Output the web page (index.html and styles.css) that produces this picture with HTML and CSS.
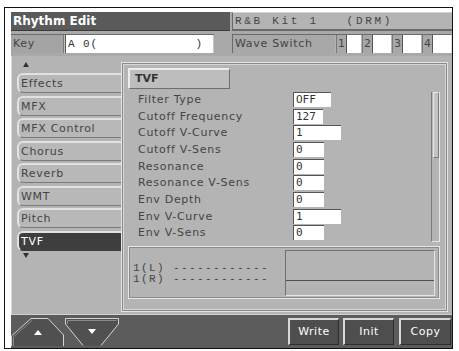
FILE: index.html
```html
<!DOCTYPE html>
<html>
<head>
<meta charset="utf-8">
<link rel="stylesheet" href="styles.css">
</head>
<body>
<div class="frame">
  <div class="lcd">
    <div class="toprow">
      <div class="title">Rhythm Edit</div>
      <div class="kitname">R&amp;B Kit 1   (DRM)</div>
    </div>
    <div class="keyrow">
      <div class="keybox">
        <span class="keylabel">Key</span>
        <span class="keyfield">A 0(             )</span>
      </div>
      <div class="wavebox">
        <span class="wavelabel">Wave Switch</span>
        <span class="wnum">1</span><span class="wchk first"></span>
        <span class="wnum">2</span><span class="wchk"></span>
        <span class="wnum">3</span><span class="wchk"></span>
        <span class="wnum">4</span><span class="wchk"></span>
      </div>
    </div>
    <div class="main">
      <div class="tabs">
        <div class="arrow"><span class="tri-up"></span></div>
        <div class="tablist">
          <div class="tab">Effects</div>
          <div class="tab">MFX</div>
          <div class="tab">MFX Control</div>
          <div class="tab">Chorus</div>
          <div class="tab">Reverb</div>
          <div class="tab">WMT</div>
          <div class="tab">Pitch</div>
          <div class="tab sel">TVF</div>
        </div>
        <div class="arrow down"><span class="tri-down"></span></div>
      </div>
      <div class="panel">
        <div class="phead">TVF</div>
        <div class="params">
          <div class="plist">
            <div class="prow"><span class="plabel">Filter Type</span><span class="pval w38">OFF</span></div>
            <div class="prow"><span class="plabel">Cutoff Frequency</span><span class="pval w30">127</span></div>
            <div class="prow"><span class="plabel">Cutoff V-Curve</span><span class="pval w48">1</span></div>
            <div class="prow"><span class="plabel">Cutoff V-Sens</span><span class="pval w31">0</span></div>
            <div class="prow"><span class="plabel">Resonance</span><span class="pval w31">0</span></div>
            <div class="prow"><span class="plabel">Resonance V-Sens</span><span class="pval w31">0</span></div>
            <div class="prow"><span class="plabel">Env Depth</span><span class="pval w31">0</span></div>
            <div class="prow"><span class="plabel">Env V-Curve</span><span class="pval w48">1</span></div>
            <div class="prow"><span class="plabel">Env V-Sens</span><span class="pval w31">0</span></div>
          </div>
          <div class="scroll"><div class="thumb"></div></div>
        </div>
        <div class="display">
          <div class="dtext">1(L) ------------<br>1(R) ------------</div>
          <div class="dbox"><div class="dtop"></div><div class="dbot"></div></div>
        </div>
      </div>
    </div>
    <div class="bottombar">
      <div class="navbtns">
        <svg class="nav" width="53" height="28" viewBox="0 0 53 28">
          <polygon points="0.5,28 0.5,18 20,0.5 37,0.5 52.5,17 52.5,28" fill="#505050"/>
          <polyline points="0.5,28 0.5,18 20,0.5 37,0.5 52.5,17 52.5,28" fill="none" stroke="#d4d4d4" stroke-width="1"/>
          <polyline points="2.5,28 2.5,19 21,2.5" fill="none" stroke="#8a8a8a" stroke-width="1"/>
          <polygon points="27,12 31,17 23,17" fill="#ffffff"/>
        </svg>
        <svg class="nav" width="54" height="28" viewBox="0 0 54 28">
          <polygon points="0.5,0.5 53.5,0.5 53.5,6 36,27.5 18,27.5 0.5,6" fill="#505050"/>
          <polyline points="18,27.5 0.5,6 0.5,0.5 53.5,0.5 53.5,6 36,27.5" fill="none" stroke="#d4d4d4" stroke-width="1"/>
          <polyline points="2.5,6 2.5,2.5 51.5,2.5" fill="none" stroke="#8a8a8a" stroke-width="1"/>
          <polygon points="23,11 31,11 27,16" fill="#ffffff"/>
        </svg>
      </div>
      <div class="cmdbtns">
        <div class="cmd">Write</div>
        <div class="cmd">Init</div>
        <div class="cmd wide">Copy</div>
      </div>
    </div>
  </div>
</div>
</body>
</html>
```
FILE: styles.css
```css
html, body {
  margin: 0;
  padding: 0;
  background: #ffffff;
}
body {
  font-family: "DejaVu Sans", sans-serif;
}
.frame {
  margin: 7px 0 0 4px;
  width: 441px;
  height: 336px;
  border: 1px solid #111;
  padding: 4px 0 0 6px;
}
.lcd {
  width: 441px;
  height: 336px;
  background: #a9a9a9;
  display: flex;
  flex-direction: column;
}
.toprow {
  display: flex;
  height: 19px;
  gap: 2px;
}
.title {
  width: 219px;
  background: #5a5a5a;
  color: #ffffff;
  font-weight: bold;
  font-size: 12px;
  line-height: 19px;
  padding-left: 2px;
  box-sizing: border-box;
  border-bottom: 1px solid #3a3a3a;
}
.kitname {
  flex: 1;
  background: #b4b4b4;
  border-left: 1px solid #6a6a6a;
  border-top: 1px solid #d4d4d4;
  border-bottom: 2px solid #6a6a6a;
  box-sizing: border-box;
  font-family: "Liberation Mono", monospace;
  font-size: 11px;
  letter-spacing: 2.7px;
  white-space: pre;
  color: #444;
  line-height: 16px;
  padding-left: 2px;
}
.keyrow {
  display: flex;
  height: 19px;
  margin-top: 3px;
  gap: 18px;
}
.keybox {
  display: flex;
  width: 203px;
  border-top: 1px solid #6a6a6a;
  background: #c4c4c4;
  box-sizing: border-box;
}
.keylabel {
  width: 53px;
  background: #a4a4a4;
  color: #444;
  font-size: 11px;
  letter-spacing: 0.7px;
  line-height: 18px;
  padding-left: 2px;
  box-sizing: border-box;
  border-right: 1px solid #7a7a7a;
}
.keyfield {
  width: 148px;
  margin-left: 1px;
  background: #ffffff;
  border-left: 1px solid #555;
  box-sizing: border-box;
  font-family: "Liberation Mono", monospace;
  font-size: 11px;
  letter-spacing: 0.9px;
  white-space: pre;
  color: #333;
  line-height: 18px;
  padding-left: 2px;
}
.wavebox {
  flex: 1;
  display: flex;
  background: #b4b4b4;
  border-top: 1px solid #6a6a6a;
  border-left: 1px solid #6a6a6a;
  border-right: 1px solid #e0e0e0;
  box-sizing: border-box;
}
.wavelabel {
  width: 100px;
  font-size: 11px;
  letter-spacing: 0.7px;
  color: #444;
  line-height: 18px;
  padding-left: 2px;
  background: #a8a8a8;
}
.wnum {
  width: 9px;
  font-size: 11px;
  color: #444;
  line-height: 18px;
  text-align: center;
  background: #a8a8a8;
  border-left: 1px solid #7a7a7a;
  margin-left: 1px;
}
.wnum:first-of-type {
  border-left: none;
}
.wchk {
  width: 18px;
  background: #ffffff;
  border-left: 1px solid #555;
  height: 18px;
}
.wchk.first {
  width: 14px;
}
.main {
  display: flex;
  height: 258px;
  margin-top: 3px;
  background: #b4b4b4;
}
.tabs {
  width: 109px;
  padding-top: 6px;
  display: flex;
  flex-direction: column;
  border-left: 1px solid #d8d8d8;
}
.arrow {
  height: 11px;
  padding-left: 11px;
}
.arrow.down {
  height: 8px;
  padding-top: 2px;
}
.tri-up {
  display: block;
  width: 0;
  height: 0;
  border-left: 3px solid transparent;
  border-right: 3px solid transparent;
  border-bottom: 5px solid #333;
}
.tri-down {
  display: block;
  width: 0;
  height: 0;
  border-left: 3px solid transparent;
  border-right: 3px solid transparent;
  border-top: 5px solid #333;
}
.tablist {
  display: flex;
  flex-direction: column;
  gap: 2.5px;
}
.tab {
  margin-left: 5px;
  height: 20px;
  box-sizing: border-box;
  border-top: 2px solid #e2e2e2;
  border-left: 2px solid #e2e2e2;
  border-bottom: 1px solid #7a7a7a;
  border-radius: 6px 0 0 6px;
  background: #b8b8b8;
  color: #444;
  font-size: 11px;
  letter-spacing: 0.7px;
  line-height: 17px;
  padding-left: 2px;
}
.tab.sel {
  background: #3e3e3e;
  color: #ffffff;
  border-bottom-color: #3e3e3e;
}
.panel {
  width: 327px;
  margin: 6px 0 2px 0;
  box-sizing: border-box;
  border: 1px solid #e4e4e4;
  box-shadow: inset 0 0 0 1px #8a8a8a, inset 0 0 0 2px #d6d6d6;
  padding: 5px 7px 0 6px;
  display: flex;
  flex-direction: column;
}
.phead {
  width: 102px;
  height: 21px;
  box-sizing: border-box;
  background: #bdbdbd;
  border-top: 2px solid #ececec;
  border-left: 2px solid #ececec;
  border-bottom: 1px solid #6e6e6e;
  border-right: 1px solid #6e6e6e;
  font-weight: bold;
  font-size: 11px;
  color: #333;
  line-height: 17px;
  padding-left: 5px;
}
.params {
  display: flex;
  margin-top: 3px;
  height: 150px;
}
.plist {
  flex: 1;
}
.prow {
  display: flex;
  height: calc(50px / 3);
}
.plabel {
  width: 165px;
  padding-left: 10px;
  box-sizing: border-box;
  font-size: 11px;
  letter-spacing: 0.7px;
  color: #444;
  line-height: 15px;
  white-space: nowrap;
}
.pval {
  height: 15px;
  box-sizing: border-box;
  background: #ffffff;
  border-top: 1px solid #555;
  border-left: 1px solid #555;
  font-family: "DejaVu Sans Mono", monospace;
  font-size: 11px;
  color: #333;
  line-height: 14px;
  padding-left: 2px;
}
.w38 { width: 38px; }
.w30 { width: 30px; }
.w48 { width: 48px; }
.w31 { width: 31px; }
.scroll {
  width: 9px;
  height: 150px;
  box-sizing: border-box;
  border-left: 1px solid #7a7a7a;
  border-bottom: 1px solid #e6e6e6;
  border-right: 1px solid #e6e6e6;
}
.thumb {
  height: 66px;
  box-sizing: border-box;
  border: 1px solid #7a7a7a;
  border-left-color: #e8e8e8;
  border-top-color: #e8e8e8;
  background: #c2c2c2;
  margin-left: 1px;
}
.display {
  margin-top: 4px;
  height: 53px;
  box-sizing: border-box;
  border: 1px solid #e6e6e6;
  box-shadow: inset 0 0 0 1px #8a8a8a;
  display: flex;
  padding: 3px 4px 2px 4px;
}
.dtext {
  width: 152px;
  padding-top: 13px;
  font-family: "Liberation Mono", monospace;
  font-size: 11px;
  letter-spacing: 1.4px;
  line-height: 11px;
  color: #444;
  white-space: pre;
}
.dbox {
  flex: 1;
  display: flex;
  flex-direction: column;
  border-top: 1px solid #707070;
  border-left: 1px solid #707070;
  border-right: 1px solid #e6e6e6;
  border-bottom: 1px solid #e6e6e6;
}
.dtop {
  height: 29px;
  border-bottom: 1px solid #505050;
}
.dbot {
  flex: 1;
}
.bottombar {
  height: 34px;
  background: #5c5c5c;
  border-top: 1px solid #d0d0d0;
  box-sizing: border-box;
  display: flex;
  justify-content: space-between;
  padding-top: 3px;
}
.navbtns {
  display: flex;
  gap: 1px;
}
.nav {
  display: block;
}
.cmdbtns {
  display: flex;
  gap: 4px;
  padding-right: 1px;
}
.cmd {
  width: 51px;
  height: 27px;
  box-sizing: border-box;
  background: #4e4e4e;
  border-top: 2px solid #d8d8d8;
  border-left: 2px solid #d8d8d8;
  border-bottom: 1px solid #2e2e2e;
  border-right: 1px solid #2e2e2e;
  color: #ffffff;
  font-size: 11px;
  letter-spacing: 0.5px;
  text-align: center;
  line-height: 23px;
}
.cmd.wide {
  width: 52px;
  margin-left: 1px;
}
```
